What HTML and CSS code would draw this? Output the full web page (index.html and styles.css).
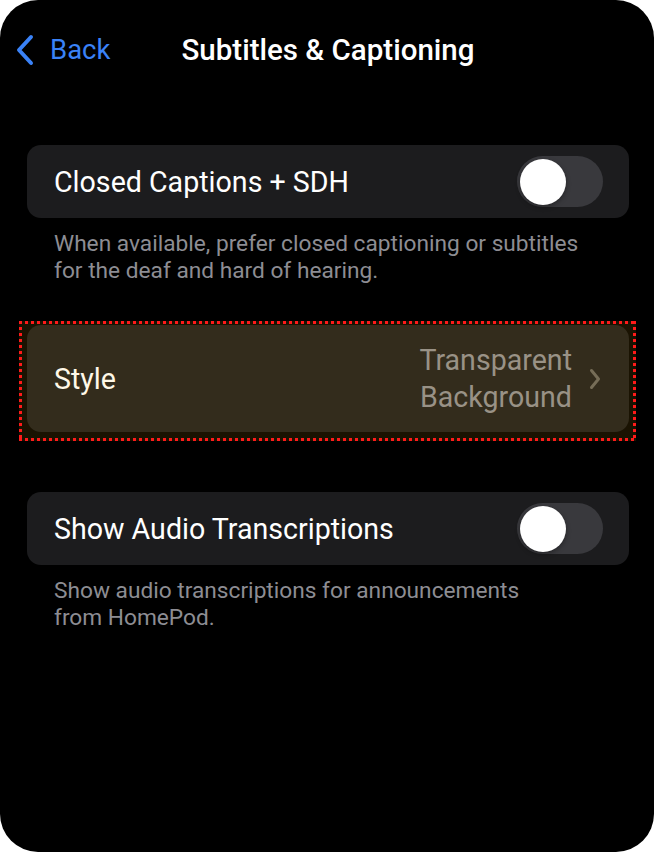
FILE: index.html
```html
<!DOCTYPE html>
<html>
<head>
<meta charset="utf-8">
<link rel="stylesheet" href="styles.css">
</head>
<body>
<div class="screen">
  <div class="nav">
    <div class="back">
      <svg class="back-chev" width="20" height="32" viewBox="0 0 20 32"><path d="M16 3 L4 16 L16 29" fill="none" stroke="#3a82f7" stroke-width="4" stroke-linecap="round" stroke-linejoin="round"/></svg>
      <span class="back-label">Back</span>
    </div>
    <div class="title">Subtitles &amp; Captioning</div>
  </div>

  <div class="group first">
    <div class="card row">
      <span class="label">Closed Captions + SDH</span>
      <span class="toggle"><span class="knob"></span></span>
    </div>
    <div class="footer">When available, prefer closed captioning or subtitles<br>for the deaf and hard of hearing.</div>
  </div>

  <div class="group style-group">
    <div class="card row style-row">
      <span class="label">Style</span>
      <span class="value-wrap">
        <span class="value">Transparent<br>Background</span>
        <svg class="chev" width="12" height="22" viewBox="0 0 12 22"><path d="M2.5 2.5 L9.5 11 L2.5 19.5" fill="none" stroke="#67655f" stroke-width="3" stroke-linecap="round" stroke-linejoin="round"/></svg>
      </span>
    </div>
    <div class="highlight"></div>
  </div>

  <div class="group third">
    <div class="card row">
      <span class="label">Show Audio Transcriptions</span>
      <span class="toggle"><span class="knob"></span></span>
    </div>
    <div class="footer">Show audio transcriptions for announcements<br>from HomePod.</div>
  </div>
</div>
</body>
</html>
```
FILE: styles.css
```css
html, body {
  margin: 0;
  padding: 0;
  background: #ffffff;
}
body {
  font-family: "Roboto", "Liberation Sans", sans-serif;
  -webkit-font-smoothing: antialiased;
}
.screen {
  width: 654px;
  height: 852px;
  background: #000;
  border-radius: 38px;
  overflow: hidden;
  display: flex;
  flex-direction: column;
}
.nav {
  position: relative;
  height: 100px;
  display: flex;
  align-items: center;
}
.back {
  display: flex;
  align-items: center;
  padding-left: 15px;
  gap: 15px;
  height: 40px;
}
.back-label {
  color: #3a82f7;
  font-size: 27.5px;
  line-height: 32px;
}
.title {
  position: absolute;
  left: 0;
  right: 0;
  top: 0;
  height: 100px;
  display: flex;
  align-items: center;
  justify-content: center;
  color: #fff;
  font-size: 29.5px;
  font-weight: 500;
  padding-left: 2px;
  pointer-events: none;
}
.group {
  margin: 0 25px 0 27px;
}
.group.first {
  margin-top: 45px;
}
.style-group {
  margin-top: 41px;
  position: relative;
}
.group.third {
  margin-top: 60px;
}
.card {
  background: #1c1c1e;
  border-radius: 14px;
}
.row {
  display: flex;
  align-items: center;
  justify-content: space-between;
  height: 73px;
  padding: 0 26px 0 27px;
}
.label {
  color: #fff;
  font-size: 28.6px;
}
.toggle {
  width: 86px;
  height: 51px;
  border-radius: 26px;
  background: #39393d;
  display: flex;
  align-items: center;
  padding-left: 3px;
  box-sizing: border-box;
}
.knob {
  width: 46px;
  height: 46px;
  border-radius: 50%;
  background: #fff;
  box-shadow: 0 2px 5px rgba(0,0,0,0.35);
}
.footer {
  color: #8d8d93;
  font-size: 22.7px;
  line-height: 27px;
  padding: 12px 27px 0 27px;
}
.style-row {
  height: 107px;
  padding-right: 28px;
}
.value-wrap {
  display: flex;
  align-items: center;
  gap: 17px;
}
.value {
  color: #8e8e93;
  font-size: 28.6px;
  line-height: 37px;
  text-align: right;
}
.chev {
  display: block;
}
.highlight {
  position: absolute;
  left: -8px;
  right: -7px;
  top: -4px;
  bottom: -9px;
  background-color: rgba(255, 190, 20, 0.1);
  background-image:
    repeating-linear-gradient(90deg, #ff1a1a 0 3px, transparent 3px 6px),
    repeating-linear-gradient(90deg, #ff1a1a 0 3px, transparent 3px 6px),
    repeating-linear-gradient(180deg, #ff1a1a 0 3px, transparent 3px 6px),
    repeating-linear-gradient(180deg, #ff1a1a 0 3px, transparent 3px 6px);
  background-size: 100% 3px, 100% 3px, 3px 100%, 3px 100%;
  background-position: top left, bottom left, top left, top right;
  background-repeat: no-repeat;
}
```
